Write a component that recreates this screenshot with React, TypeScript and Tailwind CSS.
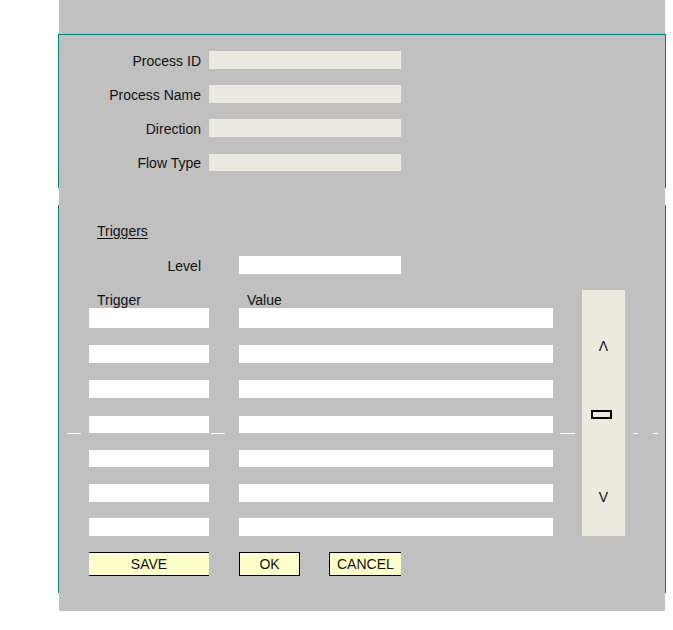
const topFields = ["Process ID", "Process Name", "Direction", "Flow Type"];

// top offset (margin) and height of each trigger row
const rows = [
  { mt: "mt-0", h: "h-[20px]" },
  { mt: "mt-[17px]", h: "h-[18px]" },
  { mt: "mt-[17px]", h: "h-[18px]" },
  { mt: "mt-[18px]", h: "h-[17px]" },
  { mt: "mt-[17px]", h: "h-[17px]" },
  { mt: "mt-[17px]", h: "h-[18px]" },
  { mt: "mt-[16px]", h: "h-[18px]" },
];

const dashes = [
  "left-[8px] w-[14px]",
  "left-[152px] w-[14px]",
  "left-[501px] w-[15px]",
  "left-[574px] w-[5px]",
  "left-[594px] w-[5px]",
];

export default function App() {
  return (
    <div className="w-[673px] h-[630px] bg-white font-['Liberation_Sans',Arial,sans-serif] text-[14px] leading-4 text-[#111]">
      <div className="ml-[59px] w-[606px] h-[611px] bg-[#c0c0c0] pt-[34px]">
        {/* Process box */}
        <div className="-mx-px h-[154px] border-t border-x border-[#008080] pt-[16px]">
          <div className="flex flex-col gap-4">
            {topFields.map((label, i) => (
              <div key={label} className="flex items-center">
                <span className="w-[142px] text-right pt-[2px]">{label}</span>
                <div className={`ml-[8px] w-[192px] bg-[#ece9df] ${i === 3 ? "h-[17px]" : "h-[18px]"}`} />
              </div>
            ))}
          </div>
        </div>

        {/* Triggers box */}
        <div className="-mx-px mt-[17px] h-[388px] border-x border-[#008080] pt-[18px]">
          <div className="pl-[38px]">
            <span className="underline underline-offset-2">Triggers</span>
          </div>

          <div className="mt-[17px] flex items-center">
            <span className="w-[142px] text-right pt-[2px]">Level</span>
            <div className="ml-[38px] w-[162px] h-[18px] bg-white" />
          </div>

          <div className="relative mt-[16px] flex pl-[30px]">
            <div className="flex flex-col">
              <div className="flex h-[18px] pt-[2px]">
                <span className="w-[150px] pl-[8px]">Trigger</span>
                <span className="pl-[8px]">Value</span>
              </div>
              {rows.map((r, i) => (
                <div key={i} className={`flex gap-[30px] ${r.mt}`}>
                  <div className={`w-[120px] bg-white ${r.h}`} />
                  <div className={`w-[314px] bg-white ${r.h}`} />
                </div>
              ))}
            </div>

            <div className="ml-[29px] w-[43px] h-[246px] bg-[#ece9df] flex flex-col items-center pt-[48px]">
              <span className="leading-4">Λ</span>
              <div className="mt-[56px] mr-[4px] w-[21px] h-[9px] border-y-2 border-x-2 border-black" />
              <span className="mt-[70px] leading-4">V</span>
            </div>

            {dashes.map((d) => (
              <div key={d} className={`absolute top-[143px] h-px bg-white ${d}`} />
            ))}
          </div>

          <div className="mt-[16px] flex pl-[30px]">
            <button className="w-[120px] h-[24px] bg-[#ffffcc] border-y border-black">SAVE</button>
            <button className="ml-[30px] w-[61px] h-[24px] bg-[#ffffcc] border border-black">OK</button>
            <button className="ml-[29px] w-[72px] h-[24px] bg-[#ffffcc] border-y border-l border-black pl-[7px] text-left">CANCEL</button>
          </div>
        </div>
      </div>
    </div>
  );
}
